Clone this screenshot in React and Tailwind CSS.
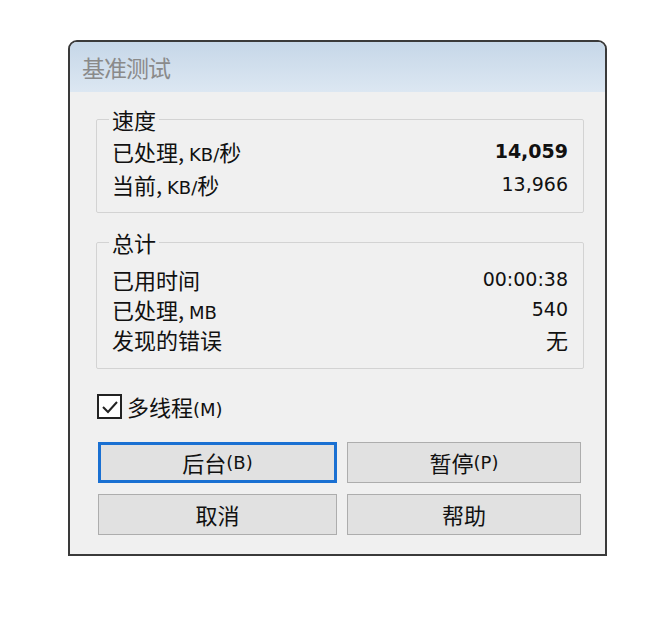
import React, { useState } from 'react';

const cjk = "font-['Noto_Sans_CJK_SC','Noto_Sans',sans-serif]";
const latin = "font-['DejaVu_Sans','Noto_Sans_CJK_SC',sans-serif]";

const Lat = ({ children, className = '' }) => (
  <span className={`${latin} text-[18px] ${className}`}>{children}</span>
);

const Row = ({ label, value, bold, cjkValue, h }) => (
  <div className={`flex justify-between items-center ${h}`}>
    <span className="text-[22px]">{label}</span>
    <span className={`${cjkValue ? 'text-[22px]' : `${latin} text-[19px]`} ${bold ? 'font-bold' : ''}`}>{value}</span>
  </div>
);

const Group = ({ title, children, className = '' }) => (
  <fieldset className={`border border-[#d3d3d3] rounded-[2px] px-[15px] ${className}`}>
    <legend className="ml-[-3px] px-[3px] text-[22px] leading-[24px]">{title}</legend>
    {children}
  </fieldset>
);

const Btn = ({ children, focused }) => (
  <button
    className={`h-[41px] bg-[#e1e1e1] text-[22px] flex items-center justify-center ${
      focused ? 'border-[3px] border-[#1a70d2]' : 'border border-[#adadad]'
    }`}
  >
    {children}
  </button>
);

const App = () => {
  const [multi, setMulti] = useState(true);

  return (
    <div className={`w-[672px] h-[620px] bg-white pt-[40px] pl-[68px] ${cjk} text-[#111]`}>
      <div className="w-[539px] h-[516px] border-2 border-[#3a3a3a] rounded-t-[9px] flex flex-col overflow-hidden">
        {/* title bar */}
        <div className="h-[50px] shrink-0 bg-gradient-to-b from-[#c6d7e8] to-[#dce7f2] flex items-center pl-[12px]">
          <span className="text-[23px] text-[#8a8a8a] tracking-[-1px]">基准测试</span>
        </div>

        <div className="flex-1 bg-[#f0f0f0] pl-[26px] pr-[21px] pt-[15px]">
          <Group title="速度" className="pb-[11px]">
            <div className="pt-[4px]">
              <Row label={<>已处理, <Lat>KB/</Lat>秒</>} value="14,059" bold h="h-[33px]" />
              <Row label={<>当前, <Lat>KB/</Lat>秒</>} value="13,966" h="h-[33px]" />
            </div>
          </Group>

          <Group title="总计" className="mt-[17px] pb-[14px]">
            <div className="pt-[10px]">
              <Row label="已用时间" value="00:00:38" h="h-[30px]" />
              <Row label={<>已处理, <Lat>MB</Lat></>} value="540" h="h-[30px]" />
              <Row label="发现的错误" value="无" cjkValue h="h-[30px]" />
            </div>
          </Group>

          <label className="mt-[25px] ml-[1px] flex items-center h-[25px] cursor-default" onClick={() => setMulti(!multi)}>
            <span className="w-[25px] h-[25px] border-2 border-[#222] bg-white flex items-center justify-center">
              {multi && (
                <svg width="18" height="14" viewBox="0 0 18 14">
                  <path d="M2 7 L7 12 L16 2" fill="none" stroke="#222" strokeWidth="2" />
                </svg>
              )}
            </span>
            <span className="ml-[5px] text-[22px]">
              多线程<Lat>(M)</Lat>
            </span>
          </label>

          <div className="mt-[23px] ml-[2px] grid grid-cols-[239px_234px] gap-x-[10px] gap-y-[11px]">
            <Btn focused>后台<Lat>(B)</Lat></Btn>
            <Btn>暂停<Lat>(P)</Lat></Btn>
            <Btn>取消</Btn>
            <Btn>帮助</Btn>
          </div>
        </div>
      </div>
    </div>
  );
};

export default App;
